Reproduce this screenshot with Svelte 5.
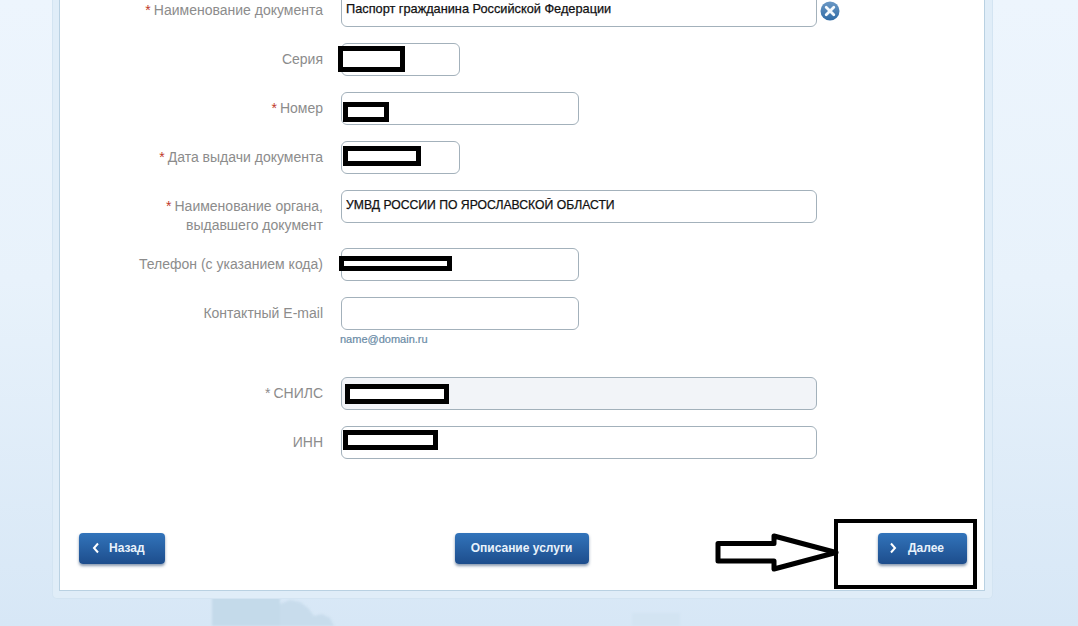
<script>
  const rows = [
    { label: 'Наименование документа', req: true, size: 'wide', value: 'Паспорт гражданина Российской Федерации', clear: true, tone: 'doc' },
    { label: 'Серия', size: 'short', mask: 'm-series' },
    { label: 'Номер', req: true, size: 'mid', mask: 'm-number' },
    { label: 'Дата выдачи документа', req: true, size: 'short', mask: 'm-date' },
    { label: 'Наименование органа,', label2: 'выдавшего документ', req: true, size: 'wide', value: 'УМВД РОССИИ ПО ЯРОСЛАВСКОЙ ОБЛАСТИ', tall: true, tone: 'org' },
    { label: 'Телефон (с указанием кода)', size: 'mid', mask: 'm-phone' },
    { label: 'Контактный E-mail', size: 'mid', hint: 'name@domain.ru' },
    { label: 'СНИЛС', req: true, grey: true, size: 'wide', mask: 'm-snils', disabled: true },
    { label: 'ИНН', size: 'wide', mask: 'm-inn' }
  ];
</script>

<div class="page">
  <div class="scenery" aria-hidden="true">
    <svg width="1078" height="30" viewBox="0 596 1078 30">
      <rect x="212" y="596" width="68" height="30" fill="#c4daea" />
      <path d="M280 626V604l10-4 10 2 8 6 6 8 8-2 8 4 4 8z" fill="#c8dcec" />
      <rect x="632" y="613" width="48" height="13" fill="#d3e4f2" />
    </svg>
  </div>
  <div class="frame">
    <main class="panel">
      <form class="form">
        {#each rows as row}
          <div class="row" class:tall={row.tall} class:hinted={row.hint}>
            <label class="label">
              <span>{#if row.req}<i class:grey={row.grey}>*</i>{/if}{row.label}</span>
              {#if row.label2}<span>{row.label2}</span>{/if}
            </label>
            <div class="field {row.size}">
              <input class="{row.tone ?? ''}" class:off={row.disabled} value={row.value ?? ''} readonly={row.disabled} />
              {#if row.mask}<span class="mask {row.mask}"></span>{/if}
              {#if row.clear}
                <svg class="clear" width="20" height="20" viewBox="0 0 20 20" aria-hidden="true">
                  <defs>
                    <linearGradient id="cg" x1="0" y1="0" x2="0" y2="1">
                      <stop offset="0" stop-color="#6b98c4" />
                      <stop offset="1" stop-color="#2f6ba6" />
                    </linearGradient>
                  </defs>
                  <circle cx="10" cy="10" r="9.5" fill="url(#cg)" />
                  <path d="M6.2 6.2l7.6 7.6M13.8 6.2l-7.6 7.6" stroke="#f4f9fd" stroke-width="2.8" stroke-linecap="round" />
                </svg>
              {/if}
              {#if row.hint}<small>{row.hint}</small>{/if}
            </div>
          </div>
        {/each}
      </form>

      <div class="actions">
        <button type="button" class="btn back">
          <svg width="8" height="12" viewBox="0 0 8 12" aria-hidden="true"><path d="M6 1.5L2 6l4 4.5" fill="none" stroke="#fff" stroke-width="2" /></svg>
          Назад
        </button>
        <button type="button" class="btn info">Описание услуги</button>
        <button type="button" class="btn next">
          <svg width="8" height="12" viewBox="0 0 8 12" aria-hidden="true"><path d="M2 1.5L6 6l-4 4.5" fill="none" stroke="#fff" stroke-width="2" /></svg>
          Далее
        </button>
      </div>

      <div class="callout" aria-hidden="true"></div>
      <svg class="arrow" width="126" height="40" viewBox="0 0 126 40" aria-hidden="true">
        <path d="M3 10.5H59V3L121 19.5 59 36V28H3z" fill="#fff" stroke="#000" stroke-width="5" stroke-linejoin="round" />
      </svg>
    </main>
  </div>
</div>

<style>
  :global(body) {
    margin: 0;
    background: #e4eff9;
  }
  .page {
    position: relative;
    height: 626px;
    overflow: hidden;
    background: linear-gradient(#edf5fd 0, #e8f2fb 280px, #d7e7f6 626px);
    font-family: "Liberation Sans", Arial, sans-serif;
  }
  .scenery {
    position: absolute;
    left: 0;
    bottom: 0;
    line-height: 0;
    filter: blur(1px);
  }
  .frame {
    position: relative;
    width: 941px;
    height: 599px;
    margin-left: 52px;
    padding: 0 7px 7px 6px;
    box-sizing: border-box;
    background: #e0edf8;
    border: solid #d3e4f2;
    border-width: 0 1px 1px 1px;
    border-radius: 0 0 5px 5px;
  }
  .panel {
    position: relative;
    height: 591px;
    box-sizing: border-box;
    background: #fff;
    border: solid #b9d1e2;
    border-width: 0 1px 1px 1px;
  }
  .form {
    display: flex;
    flex-direction: column;
    gap: 16px;
    margin-top: -6px;
    position: absolute;
    left: 0;
    right: 0;
    top: 0;
  }
  .row {
    display: grid;
    grid-template-columns: 263px 1fr;
    column-gap: 18px;
    height: 33px;
  }
  .row.tall { height: 42px; }
  .row.hinted { height: 64px; }
  .label {
    display: flex;
    flex-direction: column;
    align-items: flex-end;
    padding-top: 7px;
    font-size: 14px;
    line-height: 19px;
    color: #8c8c8c;
  }
  .label i {
    font-style: normal;
    color: #c0392b;
    margin-right: 3px;
  }
  .label i.grey { color: #8c8c8c; }
  .field { position: relative; }
  .field.wide { width: 476px; }
  .field.mid { width: 238px; }
  .field.short { width: 119px; }
  input {
    display: block;
    width: 100%;
    height: 33px;
    box-sizing: border-box;
    border: 1px solid #a3b1bb;
    border-radius: 6px;
    background: #fff;
    padding: 0 4px 3px;
    font: 12px "Liberation Sans", Arial, sans-serif;
    color: #111;
    -webkit-text-stroke: 0.25px #111;
    outline: none;
  }
  input.doc { font-size: 12.75px; padding-bottom: 5px; }
  input.org { font-size: 12.2px; }
  input.off { background: #f2f4f8; }
  small {
    display: block;
    margin-top: 3px;
    margin-left: -1px;
    font-size: 11px;
    line-height: 13px;
    color: #6a8ba6;
    -webkit-text-stroke: 0.2px #6a8ba6;
  }
  .clear {
    position: absolute;
    left: 479px;
    top: 7px;
  }
  .mask {
    position: absolute;
    box-sizing: border-box;
    background: #fff;
    border: 5px solid #000;
  }
  .m-series { left: -3px; top: 3px; width: 67px; height: 26px; }
  .m-number { left: 2px; top: 10px; width: 46px; height: 20px; }
  .m-date { left: 2px; top: 5px; width: 78px; height: 20px; }
  .m-phone { left: -2px; top: 8px; width: 113px; height: 15px; }
  .m-snils { left: 4px; top: 7px; width: 104px; height: 20px; }
  .m-inn { left: 2px; top: 4px; width: 95px; height: 20px; }
  .actions {
    position: absolute;
    left: 19px;
    right: 17px;
    top: 533px;
    display: flex;
    justify-content: space-between;
  }
  .btn {
    display: flex;
    align-items: center;
    height: 31px;
    padding: 0 0 2px;
    box-sizing: border-box;
    border: 0;
    border-radius: 4px;
    background: linear-gradient(#3274bb, #1d4d8c);
    box-shadow: 0 2px 3px rgba(40, 70, 110, .55);
    font: bold 12px "Liberation Sans", Arial, sans-serif;
    color: #e8f2fb;
  }
  .back { width: 86px; padding-left: 13px; gap: 9px; }
  .info { width: 134px; justify-content: center; }
  .next { width: 89px; padding-left: 11px; gap: 11px; }
  .callout {
    position: absolute;
    left: 774px;
    top: 519px;
    width: 143px;
    height: 70px;
    box-sizing: border-box;
    border: 4px solid #000;
  }
  .arrow {
    position: absolute;
    left: 655px;
    top: 533px;
  }
</style>
